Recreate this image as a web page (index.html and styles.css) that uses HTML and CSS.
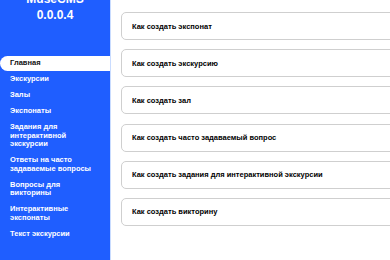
FILE: index.html
```html
<!DOCTYPE html>
<html lang="ru">
<head>
    <meta charset="UTF-8">
    <meta name="viewport" content="width=device-width, initial-scale=1.0">
    <title>MuseCMS</title>
    <link rel="stylesheet" href="styles.css">
</head>
<body>
    <div class="layout">
        <aside class="sidebar">
            <div class="sidebar__logo">
                <div>MuseCMS</div>
                <div>0.0.0.4</div>
            </div>
            <nav class="sidebar__menu">
                <a class="sidebar__item sidebar__item--active">Главная</a>
                <a class="sidebar__item">Экскурсии</a>
                <a class="sidebar__item">Залы</a>
                <a class="sidebar__item">Экспонаты</a>
                <a class="sidebar__item">Задания для интерактивной экскурсии</a>
                <a class="sidebar__item">Ответы на часто задаваемые вопросы</a>
                <a class="sidebar__item">Вопросы для викторины</a>
                <a class="sidebar__item">Интерактивные экспонаты</a>
                <a class="sidebar__item">Текст экскурсии</a>
            </nav>
        </aside>
        <main class="content">
            <div class="help__card">Как создать экспонат</div>
            <div class="help__card">Как создать экскурсию</div>
            <div class="help__card">Как создать зал</div>
            <div class="help__card">Как создать часто задаваемый вопрос</div>
            <div class="help__card">Как создать задания для интерактивной экскурсии</div>
            <div class="help__card">Как создать викторину</div>
        </main>
    </div>
</body>
</html>
```

FILE: styles.css
```css
html, body {
    margin: 0;
    height: 100%;
    overflow: hidden;
}

body {
    font-family: "Liberation Sans", Arial, sans-serif;
    background-color: #ffffff;
}

.layout {
    display: flex;
    height: 100vh;
}

.sidebar {
    width: 110px;
    flex-shrink: 0;
    background-color: #1f5eff;
    border-right: 1px solid #c9dcff;
    color: white;
}

.sidebar__logo {
    margin-top: -9px;
    text-align: center;
    font-size: 12px;
    font-weight: bold;
    line-height: 16px;
}

.sidebar__menu {
    display: flex;
    flex-direction: column;
    gap: 1.5px;
    margin-top: 33px;
}

.sidebar__item {
    display: block;
    padding: 3px 8px 3px 10px;
    font-size: 7.5px;
    font-weight: bold;
    line-height: 8.5px;
    color: white;
}

.sidebar__item--active {
    background-color: white;
    color: #111111;
    border-radius: 8px 0 0 8px;
}

.content {
    display: flex;
    flex-direction: column;
    gap: 9.2px;
    width: 290px;
    flex-shrink: 0;
    padding: 12px 0 0 10px;
}

.help__card {
    height: 26px;
    display: flex;
    align-items: center;
    padding-left: 10px;
    border: 1px solid #cfcfcf;
    border-radius: 5px;
    font-size: 7.5px;
    font-weight: bold;
    color: #000000;
}
```
